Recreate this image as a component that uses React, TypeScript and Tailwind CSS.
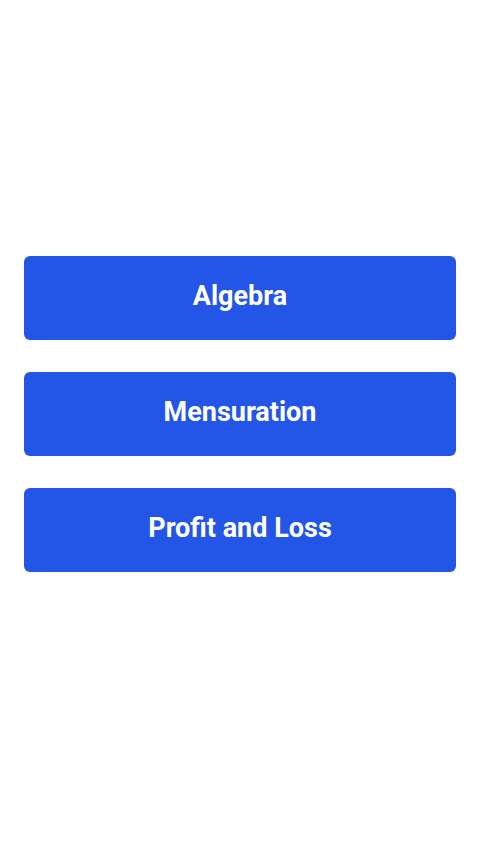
const TOPICS = ["Algebra", "Mensuration", "Profit and Loss"];

export default function App() {
  return (
    <div className="min-h-[853px] bg-white flex flex-col justify-center gap-8 px-6 pb-[25px] font-['Roboto',sans-serif]">
      {TOPICS.map((topic) => (
        <button
          key={topic}
          className="h-[84px] w-full rounded-md bg-[#2356e6] text-white text-[27px] font-bold pb-1"
        >
          {topic}
        </button>
      ))}
    </div>
  );
}
